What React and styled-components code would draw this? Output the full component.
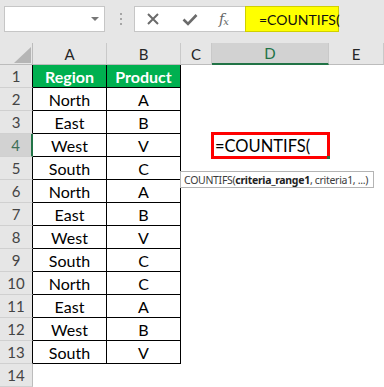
import React from "react";
import styled, { createGlobalStyle, css } from "styled-components";

const GlobalStyle = createGlobalStyle`
  body {
    margin: 0;
    background: #ffffff;
    overflow: hidden;
  }
`;

const Page = styled.div`
  position: relative;
  width: 384px;
  height: 387px;
  overflow: hidden;
  font-family: Lato, "Liberation Sans", sans-serif;
  background: #ffffff;
`;

// Formula bar area
const Toolbar = styled.div`
  display: flex;
  align-items: flex-start;
  height: 43px;
  box-sizing: border-box;
  padding: 6px 0 0 4px;
  background: #e6e6e6;
`;

const NameBox = styled.div`
  display: flex;
  align-items: center;
  justify-content: flex-end;
  width: 101px;
  height: 26px;
  box-sizing: border-box;
  padding-right: 5px;
  background: #ffffff;
  border: 1px solid #c6c6c6;
`;

const DropArrow = styled.span`
  width: 0;
  height: 0;
  border-left: 4px solid transparent;
  border-right: 4px solid transparent;
  border-top: 4px solid #777777;
`;

const Grip = styled.div`
  display: flex;
  flex-direction: column;
  gap: 3px;
  height: 26px;
  justify-content: center;
  margin: 0 12px 0 15px;
`;

const GripDot = styled.span`
  width: 2px;
  height: 2px;
  background: #a6a6a6;
`;

const FormulaButtons = styled.div`
  display: flex;
  align-items: center;
  gap: 22px;
  width: 111px;
  height: 26px;
  box-sizing: border-box;
  padding-left: 11px;
  background: #ffffff;
  border: 1px solid #c6c6c6;
  border-right: none;
`;

const Fx = styled.span`
  font-family: "DejaVu Serif", "Liberation Serif", serif;
  font-style: italic;
  font-size: 14px;
  color: #666666;
  margin-left: -1px;
  letter-spacing: -1px;

  sub {
    font-size: 10px;
    vertical-align: -1px;
  }
`;

const FormulaInput = styled.div`
  display: flex;
  align-items: center;
  width: 94px;
  height: 26px;
  box-sizing: border-box;
  padding-left: 13px;
  background: #ffff00;
  border: 1px solid #d0d000;
  font-size: 14px;
  color: #111111;
`;

// Sheet
const Sheet = styled.div`
  display: grid;
  grid-template-columns: 33px 74px 74px 31px 117px 55px;
  grid-template-rows: 22px;
  grid-auto-rows: 23px;
`;

const Corner = styled.div`
  background: #e6e6e6;
  border-right: 1px solid #bcbcbc;
  border-bottom: 1px solid #bcbcbc;
  box-sizing: border-box;
  line-height: 0;
`;

const ColHead = styled.div`
  display: flex;
  align-items: center;
  justify-content: center;
  box-sizing: border-box;
  background: #e6e6e6;
  border-right: 1px solid #c9c9c9;
  border-bottom: 1px solid #bcbcbc;
  font-size: 15px;
  color: #262626;
  ${(p) =>
    p.$selected &&
    css`
      background: #d2d2d2;
      color: #217346;
      border-bottom: 2px solid #217346;
    `}
`;

const RowHead = styled.div`
  display: flex;
  align-items: center;
  justify-content: center;
  box-sizing: border-box;
  background: #e6e6e6;
  border-bottom: 1px solid #d0d0d0;
  border-right: 1px solid ${(p) => (p.$edge ? "#000000" : "#bcbcbc")};
  font-size: 15px;
  color: #444444;
  ${(p) =>
    p.$selected &&
    css`
      background: #d2d2d2;
      color: #3f6f57;
      border-right: 2px solid #217346;
    `}
`;

const Cell = styled.div`
  position: relative;
  display: flex;
  align-items: center;
  justify-content: center;
  box-sizing: border-box;
  font-size: 16px;
  color: #000000;
  ${(p) =>
    p.$table &&
    css`
      border-right: 1px solid #000000;
      border-bottom: 1px solid #000000;
    `}
  ${(p) =>
    p.$head &&
    css`
      background: #00b050;
      color: #ffffff;
      font-weight: 700;
    `}
`;

const EditBox = styled.div`
  position: absolute;
  top: -2px;
  bottom: -2px;
  left: -1px;
  right: -1px;
  display: flex;
  align-items: center;
  padding-left: 1px;
  border: 3px solid #ff0000;
  font-size: 16.5px;
  color: #000000;
`;

const FillHandle = styled.span`
  position: absolute;
  right: -3px;
  bottom: -3px;
  width: 3px;
  height: 3px;
  background: #217346;
`;

const Tooltip = styled.div`
  position: absolute;
  top: 171px;
  left: 180px;
  width: 194px;
  height: 17px;
  box-sizing: border-box;
  display: flex;
  align-items: center;
  padding: 0 0 0 3px;
  background: #ffffff;
  border: 1px solid #b4b4b4;
  font-family: "Noto Sans", "Open Sans", sans-serif;
  font-size: 10.5px;
  letter-spacing: -0.3px;
  color: #3c3c3c;
  white-space: nowrap;

  b {
    font-weight: 700;
    color: #222222;
  }
`;

const columns = ["A", "B", "C", "D", "E"];

const rows = [
  ["Region", "Product"],
  ["North", "A"],
  ["East", "B"],
  ["West", "V"],
  ["South", "C"],
  ["North", "A"],
  ["East", "B"],
  ["West", "V"],
  ["South", "C"],
  ["North", "C"],
  ["East", "A"],
  ["West", "B"],
  ["South", "V"],
  null,
];

const App = () => {
  return (
    <Page>
      <GlobalStyle />
      <Toolbar>
        <NameBox>
          <DropArrow />
        </NameBox>
        <Grip>
          <GripDot />
          <GripDot />
          <GripDot />
        </Grip>
        <FormulaButtons>
          <svg width="14" height="14" viewBox="0 0 14 14">
            <path d="M2 2 L12 12 M12 2 L2 12" stroke="#6b6b6b" strokeWidth="2" fill="none" />
          </svg>
          <svg width="16" height="14" viewBox="0 0 16 14">
            <path d="M1.5 7.5 L6 12 L14.5 3" stroke="#6b6b6b" strokeWidth="2.6" fill="none" />
          </svg>
          <Fx>
            f<sub>x</sub>
          </Fx>
        </FormulaButtons>
        <FormulaInput>=COUNTIFS(</FormulaInput>
      </Toolbar>

      <Sheet>
        <Corner>
          <svg width="32" height="21" viewBox="0 0 32 21">
            <polygon points="14,20 31,20 31,4" fill="#b5b5b5" />
          </svg>
        </Corner>
        {columns.map((c) => (
          <ColHead key={c} $selected={c === "D"}>
            {c}
          </ColHead>
        ))}

        {rows.map((r, i) => (
          <React.Fragment key={i}>
            <RowHead $selected={i === 3} $edge={r !== null}>
              {i + 1}
            </RowHead>
            <Cell $table={r !== null} $head={i === 0}>
              {r && r[0]}
            </Cell>
            <Cell $table={r !== null} $head={i === 0}>
              {r && r[1]}
            </Cell>
            <Cell />
            <Cell>
              {i === 3 && (
                <EditBox>
                  =COUNTIFS(
                  <FillHandle />
                </EditBox>
              )}
            </Cell>
            <Cell />
          </React.Fragment>
        ))}
      </Sheet>

      <Tooltip>
        COUNTIFS(<b>criteria_range1</b>, criteria1, ...)
      </Tooltip>
    </Page>
  );
};

export default App;
